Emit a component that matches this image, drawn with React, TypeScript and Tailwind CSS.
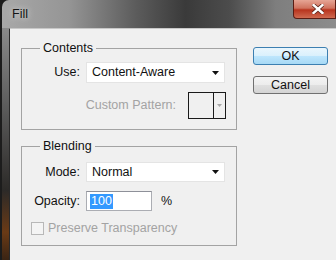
import React from 'react';

const Caret = ({ color = '#111' }: { color?: string }) => (
    <svg width="7" height="4" viewBox="0 0 7 4">
        <path d="M0 0h7L3.5 4z" fill={color} />
    </svg>
);

const Select = ({ value, h }: { value: string; h: string }) => (
    <div className={`ml-[6px] flex w-[139px] ${h} items-center justify-between border border-[#e4e4e4] bg-white pl-[5px] pr-[5px] text-[12.5px] text-[#111]`}>
        <span>{value}</span>
        <Caret />
    </div>
);

const Group = ({ title, children }: { title: string; children: React.ReactNode }) => (
    <fieldset className="border border-[#a3a3a3]">
        <legend className="ml-[18px] px-[3px] text-[12.5px] leading-[14px] text-[#111]">{title}</legend>
        {children}
    </fieldset>
);

const App: React.FC = () => {
    return (
        <div className="flex h-[260px] w-[336px] flex-col overflow-hidden bg-[#1c1c1c] pl-[2px] font-['Liberation_Sans',Arial,sans-serif]">
            {/* title bar */}
            <div className="flex h-[28px] shrink-0 items-start rounded-tl-[7px] bg-[linear-gradient(to_right,#a8a8a8_0%,#959595_20%,#5c5c5c_40%,#3a3a3a_55%,#4c4c4c_68%,#7e7e7e_82%,#8c8c8c_100%)]">
                <span className="ml-[10px] mt-[7px] text-[12.5px] leading-[14px] text-[#151515] [text-shadow:0_0_6px_#e8e8e8]">Fill</span>
                <div className="ml-auto flex h-[19px] w-[43px] items-center rounded-bl-[4px] border border-t-0 border-[#5a1d14] bg-[linear-gradient(to_bottom,#e6a595_0%,#d0735f_45%,#b8341e_55%,#cf6a50_100%)] pl-[18px]">
                    <svg width="12" height="10" viewBox="0 0 12 10">
                        <path d="M1.5 1l9 8M10.5 1l-9 8" stroke="#5a2318" strokeWidth="4" strokeLinecap="square" />
                        <path d="M1.5 1l9 8M10.5 1l-9 8" stroke="#fff" strokeWidth="2.4" strokeLinecap="square" />
                    </svg>
                </div>
            </div>

            <div className="flex flex-1">
                {/* left frame */}
                <div className="w-[7px] shrink-0 bg-[linear-gradient(to_bottom,#8a8a8a_0%,#5a5a5a_35%,#2c2a28_70%,#6a3a16_88%,#3a2414_100%)]" />

                {/* client area */}
                <div className="flex flex-1 items-start border-l border-t border-l-[#2a2a2a] border-t-[#c8c8c8] bg-[#f0f0f0] pl-[11px] pt-[12px]">
                    <div className="flex w-[216px] flex-col">
                        <Group title="Contents">
                            <div className="mt-[7px] flex items-center">
                                <span className="w-[58px] text-right text-[12.5px] text-[#111]">Use:</span>
                                <Select value="Content-Aware" h="h-[21px]" />
                            </div>
                            <div className="mt-[9px] flex items-center justify-end pb-[10px] pr-[10px]">
                                <span className="mr-[12px] text-[12.5px] text-[#a3a3a3]">Custom Pattern:</span>
                                <div className="flex h-[27px] w-[38px] border border-[#1a1a1a]">
                                    <div className="w-[25px] border-r border-[#1a1a1a]" />
                                    <div className="flex flex-1 items-center justify-center">
                                        <svg width="5" height="3" viewBox="0 0 5 3">
                                            <path d="M0 0h5L2.5 3z" fill="#a8a8a8" />
                                        </svg>
                                    </div>
                                </div>
                            </div>
                        </Group>

                        <div className="mt-[9px]">
                            <Group title="Blending">
                                <div className="mt-[9px] flex items-center">
                                    <span className="w-[58px] text-right text-[12.5px] text-[#111]">Mode:</span>
                                    <Select value="Normal" h="h-[20px]" />
                                </div>
                                <div className="mt-[9px] flex items-center">
                                    <span className="w-[58px] text-right text-[12.5px] text-[#111]">Opacity:</span>
                                    <div className="ml-[6px] flex h-[20px] w-[66px] items-center border border-[#abadb3] border-t-[#8e9099] bg-white pl-[3px]">
                                        <span className="bg-[#3399ff] px-[1px] text-[12.5px] leading-[15px] text-white">100</span>
                                    </div>
                                    <span className="ml-[9px] text-[12.5px] text-[#111]">%</span>
                                </div>
                                <div className="ml-[9px] mt-[8px] flex items-center pb-[7px]">
                                    <div className="h-[13px] w-[13px] border border-[#b8b8b8] bg-[#f4f4f4]" />
                                    <span className="ml-[4px] text-[12.5px] text-[#a3a3a3]">Preserve Transparency</span>
                                </div>
                            </Group>
                        </div>
                    </div>

                    {/* buttons */}
                    <div className="ml-[16px] mt-[6px] flex flex-col gap-[11px]">
                        <button className="h-[18px] w-[75px] rounded-[3px] border border-[#3c7fb1] bg-[linear-gradient(to_bottom,#eaf6fd_0%,#d9f0fc_50%,#bee6fd_50%,#a7d9f5_100%)] text-[12.5px] leading-[16px] text-[#111]">
                            OK
                        </button>
                        <button className="h-[18px] w-[75px] rounded-[3px] border border-[#707070] bg-[linear-gradient(to_bottom,#f4f4f4_0%,#ececec_50%,#e0e0e0_50%,#d4d4d4_100%)] text-[12.5px] leading-[16px] text-[#111]">
                            Cancel
                        </button>
                    </div>
                </div>
            </div>
        </div>
    );
};

export default App;
